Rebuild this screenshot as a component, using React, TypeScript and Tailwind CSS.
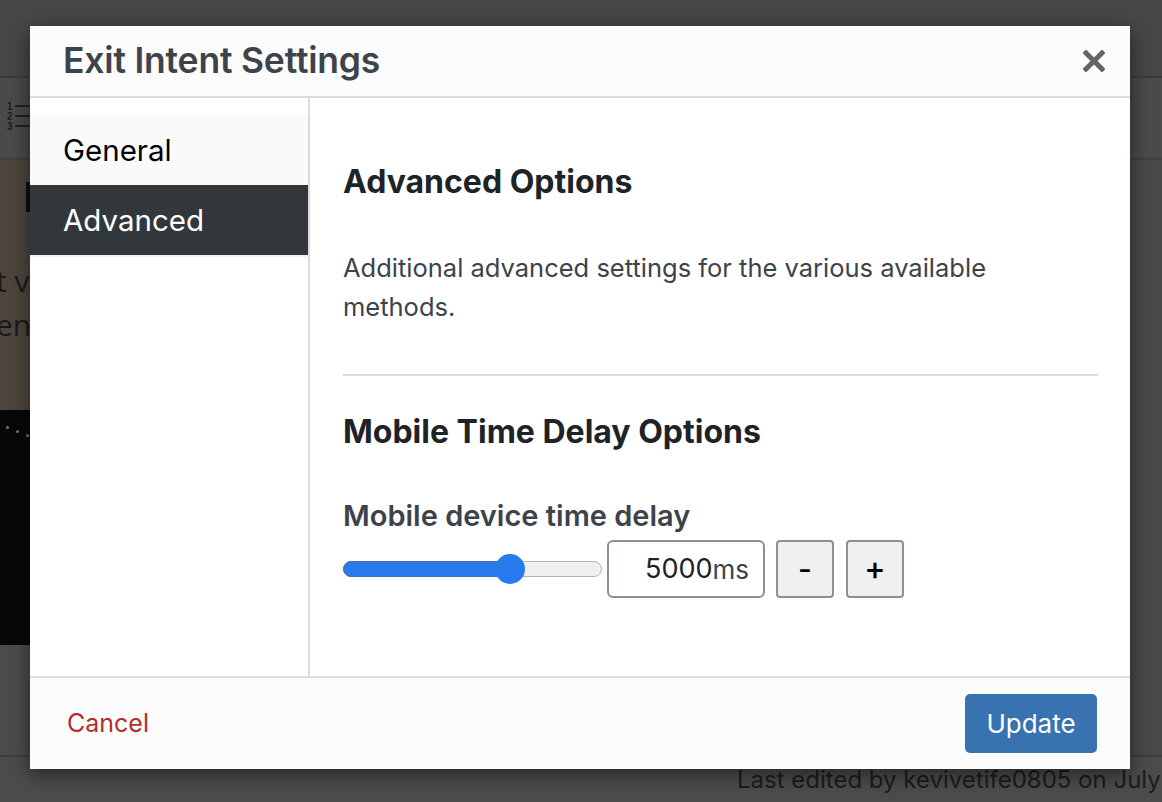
import React from "react";

function NumberedListIcon() {
  return (
    <svg width="26" height="34" viewBox="0 0 26 34" fill="none">
      <text x="0" y="10" fontSize="10" fontWeight="bold" fill="#1e1e1e" fontFamily="Liberation Sans, sans-serif">1</text>
      <text x="0" y="20" fontSize="10" fontWeight="bold" fill="#1e1e1e" fontFamily="Liberation Sans, sans-serif">2</text>
      <text x="0" y="30" fontSize="10" fontWeight="bold" fill="#1e1e1e" fontFamily="Liberation Sans, sans-serif">3</text>
      <line x1="8" y1="6" x2="26" y2="6" stroke="#1e1e1e" strokeWidth="1.8" />
      <line x1="8" y1="16" x2="26" y2="16" stroke="#1e1e1e" strokeWidth="1.8" />
      <line x1="8" y1="26" x2="26" y2="26" stroke="#1e1e1e" strokeWidth="1.8" />
    </svg>
  );
}

function Background() {
  return (
    <div className="flex flex-col w-[1162px] h-[802px] bg-[#474747]">
      <div className="h-[78px] shrink-0 bg-[#474747] border-b-2 border-[#3c3c3c]" />
      <div className="h-[82px] shrink-0 bg-[#4a4b4b] border-b-2 border-[#414141] flex items-start pl-[7px] pt-[22px]">
        <NumberedListIcon />
      </div>
      <div className="flex-1 flex">
        <div className="w-[30px] flex flex-col overflow-hidden">
          <div className="h-[250px] bg-[#4d463d] relative overflow-hidden text-[#1c1a17] text-[30px] leading-none font-['Open_Sans',sans-serif]">
            <div className="absolute left-[26px] top-[22px] w-[8px] h-[30px] bg-[#0e0d0b]" />
            <div className="absolute left-[-4px] top-[106px] whitespace-nowrap">t v</div>
            <div className="absolute left-[-4px] top-[150px] whitespace-nowrap">ent</div>
          </div>
          <div className="h-[235px] bg-[#080808] relative">
            <div className="absolute left-[6px] top-[16px] w-[3px] h-[3px] rounded-full bg-[#777]" />
            <div className="absolute left-[16px] top-[20px] w-[3px] h-[3px] rounded-full bg-[#777]" />
            <div className="absolute left-[26px] top-[24px] w-[3px] h-[3px] rounded-full bg-[#777]" />
          </div>
          <div className="flex-1 bg-[#4c4c4c]" />
        </div>
        <div className="flex-1 bg-[#4a4a4a]" />
      </div>
      <div className="h-[47px] shrink-0 bg-[#4b4d4d] border-t-2 border-[#3e3e3e] flex items-center pl-[737px] whitespace-nowrap overflow-hidden text-[24px] text-[#1c1c1c] font-['Inter',sans-serif]">
        Last edited by kevivetife0805 on July
      </div>
    </div>
  );
}

function Slider() {
  return (
    <div className="relative w-[259px] h-[32px] flex items-center">
      <div className="w-full h-[16px] rounded-full bg-[#efefef] border border-[#b5b5b5]" />
      <div className="absolute left-0 top-[8px] w-[170px] h-[16px] rounded-full bg-[#2a7aef] border border-[#4d6fa3]" />
      <div className="absolute left-[152px] top-[1px] w-[30px] h-[30px] rounded-full bg-[#2a7aef]" />
    </div>
  );
}

export default function App() {
  return (
    <div className="relative w-[1162px] h-[802px] overflow-hidden font-['Inter',sans-serif]">
      <Background />
      <div className="absolute left-[30px] top-[26px] w-[1100px] h-[743px] bg-white flex flex-col shadow-[0_5px_20px_rgba(0,0,0,0.55)]">
        {/* Header */}
        <div className="h-[72px] shrink-0 bg-[#fcfcfc] border-b-2 border-[#dcdcde] flex items-center justify-between pl-[33px] pr-[25px]">
          <h1 className="text-[35.5px] font-semibold text-[#3c434a] tracking-[-0.2px]">Exit Intent Settings</h1>
          <svg width="22" height="22" viewBox="0 0 22 22">
            <path d="M3 3 L19 19 M19 3 L3 19" stroke="#646464" strokeWidth="5" strokeLinecap="square" />
          </svg>
        </div>
        {/* Body */}
        <div className="flex-1 flex min-h-0">
          <div className="w-[280px] shrink-0 border-r-2 border-[#dcdcde] pt-[17px]">
            <div className="h-[70px] bg-[#fafafa] flex items-center pl-[33px] text-[29.5px] text-[#000]">General</div>
            <div className="h-[70px] bg-[#32373c] flex items-center pl-[33px] text-[29.5px] text-white">Advanced</div>
            <div className="h-[2px] bg-[#f0f0f0]" />
          </div>
          <div className="flex-1 pl-[33px] pr-[32px] pt-[64px]">
            <h2 className="text-[32px] leading-[40px] font-bold text-[#1d2327]">Advanced Options</h2>
            <p className="mt-[46px] text-[25.5px] leading-[39px] text-[#3c434a] w-[700px]">
              Additional advanced settings for the various available methods.
            </p>
            <div className="mt-[48px] h-[2px] bg-[#dcdcde]" />
            <h2 className="mt-[36px] text-[32px] leading-[40px] font-bold text-[#1d2327]">Mobile Time Delay Options</h2>
            <div className="mt-[47px] text-[29px] leading-[34px] font-semibold text-[#3c434a]">Mobile device time delay</div>
            <div className="mt-[7px] flex items-center">
              <Slider />
              <div className="ml-[5px] w-[158px] h-[58px] border-2 border-[#8c8f94] rounded-[6px] flex items-center justify-end pr-[14px] text-[#1d2327]">
                <span className="text-[27px]">5000</span>
                <span className="text-[26px] text-[#3c434a]">ms</span>
              </div>
              <button className="ml-[11px] w-[58px] h-[58px] bg-[#f0f0f0] border-2 border-[#8c8f94] rounded-[4px] text-[30px] font-medium text-black flex items-center justify-center">-</button>
              <button className="ml-[12px] w-[58px] h-[58px] bg-[#f0f0f0] border-2 border-[#8c8f94] rounded-[4px] text-[32px] font-medium text-black flex items-center justify-center">+</button>
            </div>
          </div>
        </div>
        {/* Footer */}
        <div className="h-[93px] shrink-0 bg-[#fcfcfc] border-t-2 border-[#dcdcde] flex items-center justify-between pl-[37px] pr-[33px]">
          <span className="text-[25px] text-[#b32d2e]">Cancel</span>
          <button className="w-[132px] h-[59px] bg-[#3872b0] rounded-[5px] text-white text-[26px] flex items-center justify-center">Update</button>
        </div>
      </div>
    </div>
  );
}
